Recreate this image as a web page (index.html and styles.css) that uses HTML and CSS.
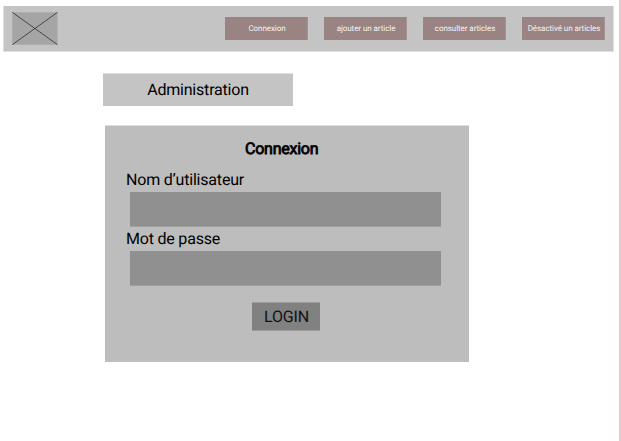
FILE: index.html
```html
<!DOCTYPE html>
<html lang="fr">
<head>
<meta charset="utf-8">
<title>Administration</title>
<link rel="stylesheet" href="styles.css">
</head>
<body>
<header class="topbar">
  <svg class="logo" viewBox="0 0 46 33"><rect x=".3" y=".3" width="45.2" height="32.4" fill="#a5a5a5"/><path d="M.3 .3L45.5 32.7M45.5 .3L.3 32.7" stroke="#303030" stroke-width=".8" fill="none"/></svg>
  <nav class="nav">
    <a class="nav-item">Connexion</a>
    <a class="nav-item">ajouter un article</a>
    <a class="nav-item">consulter articles</a>
    <a class="nav-item">Désactivé un articles</a>
  </nav>
</header>
<main>
  <h1 class="title">Administration</h1>
  <section class="panel">
    <h2 class="heading">Connexion</h2>
    <div class="label">Nom d’utilisateur</div>
    <div class="field"></div>
    <div class="label second">Mot de passe</div>
    <div class="field"></div>
    <div class="login">LOGIN</div>
  </section>
</main>
</body>
</html>
```
FILE: styles.css
```css
* { box-sizing: border-box; }
body {
  margin: 0;
  height: 441px;
  overflow: hidden;
  padding: 6px 5px 0 3px;
  border-right: 2px solid #e2ced0;
  background: #fff;
  font-family: Roboto, sans-serif;
  font-size: 16px;
  letter-spacing: -.2px;
  color: #000;
  text-rendering: geometricPrecision;
}
.topbar {
  height: 46px;
  display: flex;
  align-items: flex-start;
  justify-content: space-between;
  padding: 6px 8px 0;
  background: #c4c4c4;
  border: solid #dfdfdf;
  border-width: 0 1px 1px;
}
.logo { width: 46px; height: 33px; }
.nav { display: flex; gap: 16px; padding-top: 5px; }
.nav-item {
  width: 83px;
  height: 23px;
  line-height: 22px;
  padding: 1px 0 0 2px;
  text-align: center;
  white-space: nowrap;
  font-size: 8px;
  letter-spacing: -.06px;
  color: #f8f4f4;
  background: #998383;
  border: solid #a59393;
  border-width: 0 1px 0 0;
}
.title {
  margin: 21px 0 0 100px;
  width: 190px;
  height: 33px;
  line-height: 31px;
  font-size: inherit;
  font-weight: 400;
  text-align: center;
  background: #c4c4c4;
  border-top: 1px solid #dfdfdf;
}
.panel {
  margin: 19px 0 0 102px;
  width: 364px;
  height: 237px;
  padding: 13px 28px 0 21px;
  background: #bdbdbd;
  border-top: 1px solid #dcdcdc;
}
.heading {
  margin: 0 0 12px 119px;
  font-size: inherit;
  line-height: 19px;
  font-weight: 400;
  letter-spacing: -.25px;
  -webkit-text-stroke: .8px #000;
}
.label { line-height: 19px; height: 22px; }
.second { margin-top: 2px; }
.field {
  margin-left: 4px;
  height: 35px;
  background: #909090;
  border: solid #a0a0a0;
  border-width: 0 0 1px 0;
}
.login {
  margin: 16px 0 0 126px;
  width: 68px;
  height: 29px;
  line-height: 27px;
  padding-left: 1px;
  text-align: center;
  color: #111;
  background: #818181;
  border: solid #9c9c9c;
  border-width: 1px 0;
}
```
